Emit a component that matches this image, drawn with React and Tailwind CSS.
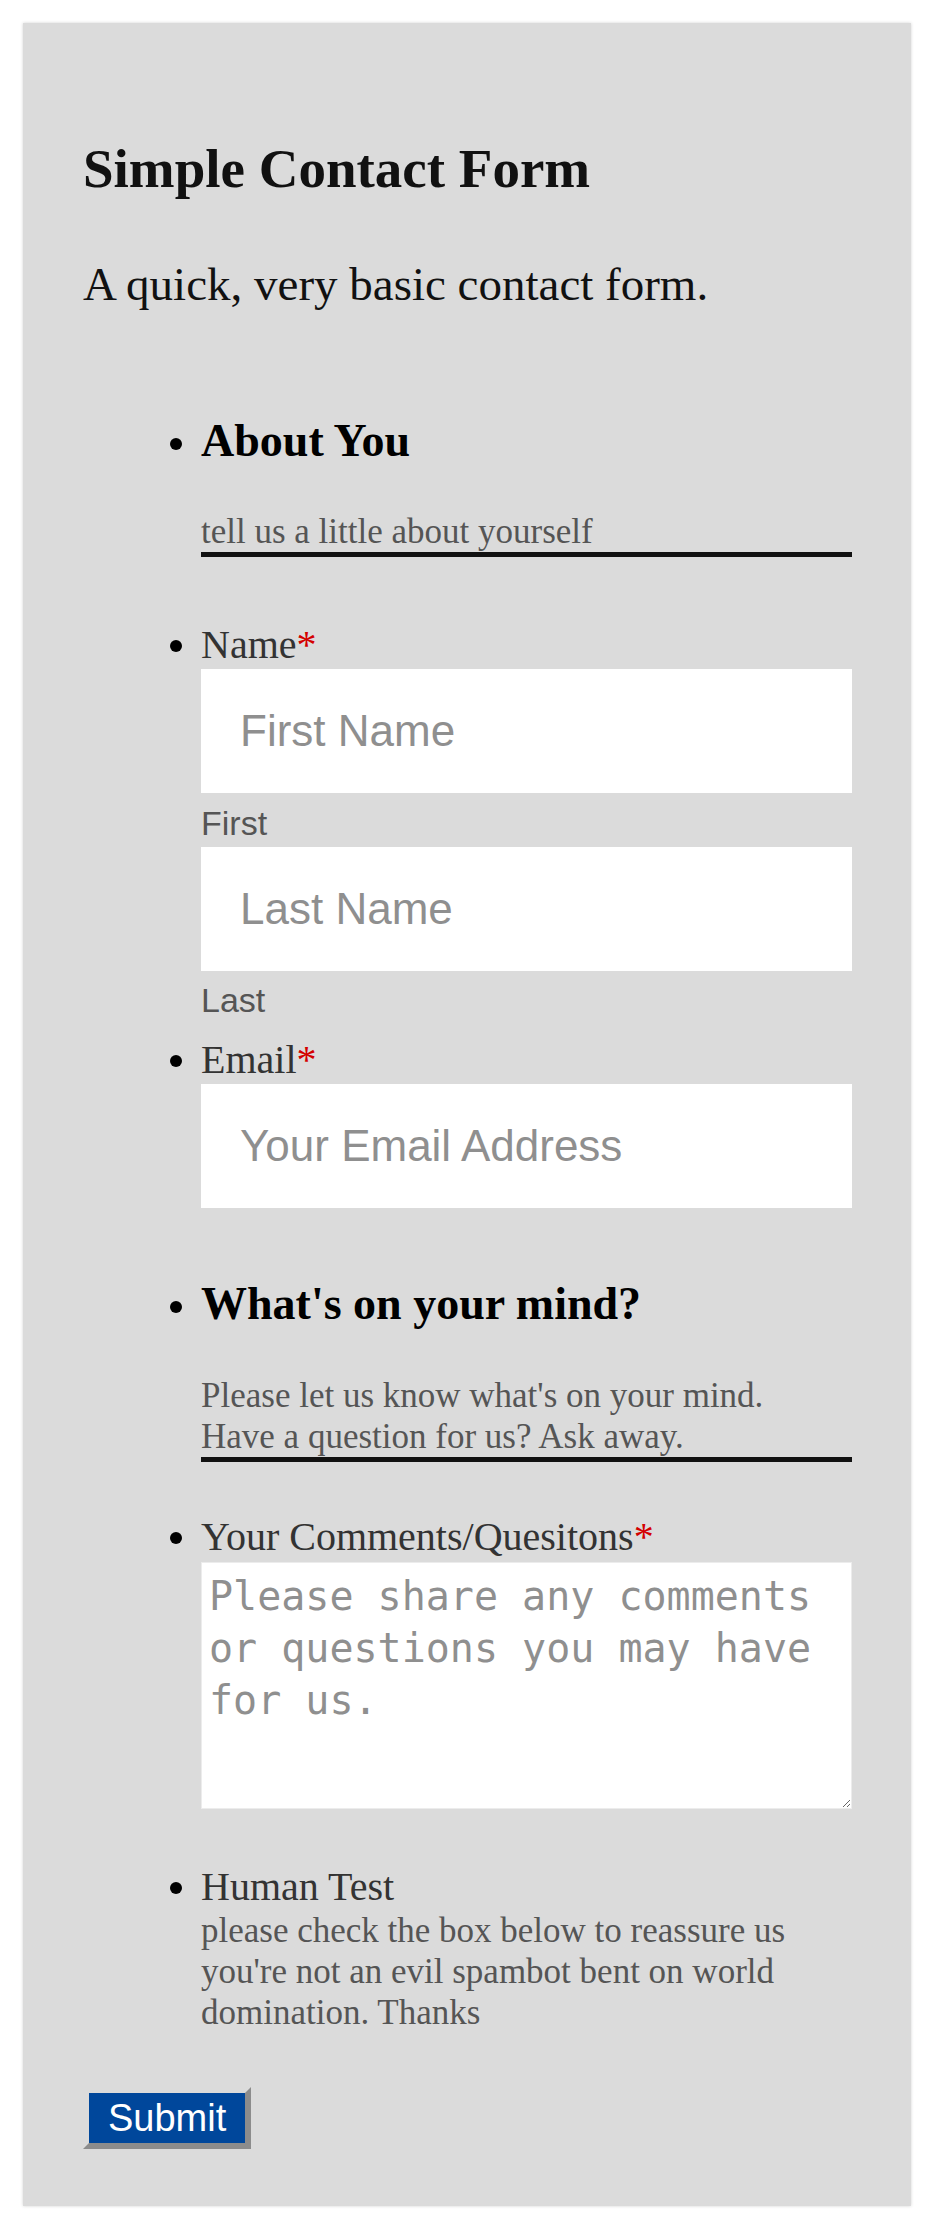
import React from "react";

const serif = "font-['Liberation_Serif','Times_New_Roman',serif]";
const sans = "font-['Liberation_Sans',Arial,sans-serif]";

const Req = () => <span className="text-[#d40000]">*</span>;

const TextInput = ({ placeholder, className = "" }) => (
  <input
    type="text"
    placeholder={placeholder}
    className={`block w-full h-[124px] bg-white pl-[39px] pr-4 text-[44px] text-[#333] placeholder:text-[#8f8f8f] outline-none ${sans} ${className}`}
  />
);

const App = () => {
  return (
    <div className="min-h-screen bg-white p-[23px]">
      <div
        className={`bg-[#dbdbdb] shadow-[0_0_3px_rgba(0,0,0,0.18)] pt-[114px] pb-[57px] pl-[60px] pr-[59px] ${serif}`}
      >
        <h1 className="text-[55px] leading-[64px] font-bold text-[#111]">
          Simple Contact Form
        </h1>
        <p className="mt-[56px] text-[47px] leading-[54px] text-[#111]">
          A quick, very basic contact form.
        </p>

        <form onSubmit={(e) => e.preventDefault()}>
          <ul className="list-disc pl-[118px] mt-[104px] text-[40px] leading-[47px] marker:text-black">
            <li>
              <h2 className="text-[46px] leading-[52px] font-bold text-black">
                About You
              </h2>
              <p className="mt-[44px] text-[35px] leading-[41px] text-[#555] border-b-[5px] border-[#111]">
                tell us a little about yourself
              </p>
            </li>

            <li className="mt-[64px]">
              <label className="block leading-[47px] text-[#333]">
                Name<Req />
              </label>
              <TextInput placeholder="First Name" className="mt-px" />
              <div className={`mt-[10px] text-[34px] leading-[40px] text-[#555] ${sans}`}>
                First
              </div>
              <TextInput placeholder="Last Name" className="mt-[4px]" />
              <div className={`mt-[9px] text-[34px] leading-[40px] text-[#555] ${sans}`}>
                Last
              </div>
            </li>

            <li className="mt-[16px]">
              <label className="block leading-[47px] text-[#333]">
                Email<Req />
              </label>
              <TextInput placeholder="Your Email Address" className="mt-px" />
            </li>

            <li className="mt-[70px]">
              <h2 className="text-[46px] leading-[52px] font-bold text-black">
                What's on your mind?
              </h2>
              <p className="mt-[45px] text-[35px] leading-[41px] text-[#555] border-b-[5px] border-[#111]">
                Please let us know what's on your mind.
                <br />
                Have a question for us? Ask away.
              </p>
            </li>

            <li className="mt-[51px]">
              <label className="block leading-[47px] text-[#333]">
                Your Comments/Quesitons<Req />
              </label>
              <textarea
                placeholder="Please share any comments or questions you may have for us."
                className="mt-[2px] block w-full h-[247px] bg-white border border-[#ececec] p-[7px] text-[40px] leading-[52px] text-[#333] placeholder:text-[#8f8f8f] outline-none font-['DejaVu_Sans_Mono',monospace]"
              />
            </li>

            <li className="mt-[54px]">
              <div className="leading-[47px] text-[#333]">Human Test</div>
              <p className="text-[35px] leading-[41px] text-[#555]">
                please check the box below to reassure us you're not an evil
                spambot bent on world domination. Thanks
              </p>
            </li>
          </ul>

          <button
            type="submit"
            className={`mt-[54px] block h-[62px] bg-[#00479b] bg-clip-padding border-[6px] border-t-[#dbdbdb] border-l-[#dbdbdb] border-r-[#8c8c8c] border-b-[#8c8c8c] px-[19px] text-[38px] leading-[50px] text-white ${sans}`}
          >
            Submit
          </button>
        </form>
      </div>
    </div>
  );
};

export default App;
